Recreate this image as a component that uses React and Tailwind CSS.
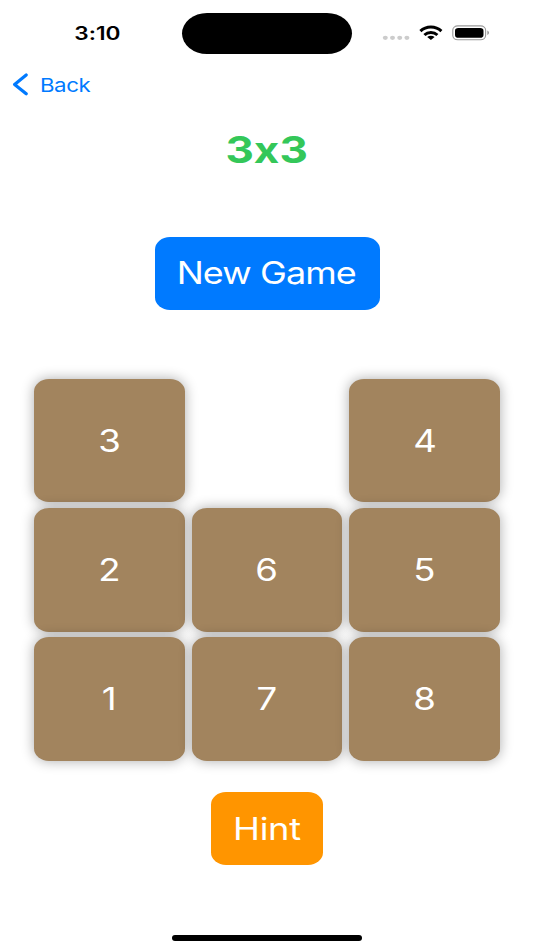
import React from 'react';

const board = [
  [3, null, 4],
  [2, 6, 5],
  [1, 7, 8],
];

const StatusBar = () => (
  <div className="flex h-[66px] pt-[12.5px]">
    <div className="w-[182px] pl-[12px] h-[41px] flex items-center justify-center">
      <span className="text-[18px] font-semibold scale-x-[1.26]">3:10</span>
    </div>
    <div className="w-[170px] h-[41px] bg-black rounded-[25px/20.5px]" />
    <div className="flex-1 h-[41px]">
      <svg className="w-full h-full" viewBox="352 13 182 41">
        <g fill="#cccccc">
          <ellipse cx="385.3" cy="37.8" rx="2.5" ry="2.1" />
          <ellipse cx="392.5" cy="37.8" rx="2.5" ry="2.1" />
          <ellipse cx="399.7" cy="37.8" rx="2.5" ry="2.1" />
          <ellipse cx="406.9" cy="37.8" rx="2.5" ry="2.1" />
        </g>
        <g fill="none" stroke="#000" strokeWidth="3">
          <path d="M420.4 31.1C426.2 25.6 435.6 25.6 441.4 31.1" />
          <path d="M424.4 35C428 31.6 433.8 31.6 437.4 35" />
        </g>
        <path d="M427.2 37.1C429.3 35.4 432.5 35.4 434.6 37.1L430.9 40Z" fill="#000" />
        <rect x="452.8" y="25.9" width="32.8" height="13.8" rx="5" ry="4.2" fill="none" stroke="#999" strokeWidth="1.1" />
        <rect x="455" y="27.9" width="28.5" height="9.8" rx="3.4" ry="2.8" fill="#000" />
        <path d="M487.3 30.6C489.6 31.4 489.6 34.2 487.3 35Z" fill="#999" />
      </svg>
    </div>
  </div>
);

const BackButton = () => (
  <button className="flex items-center h-[37px] pl-[12px] text-[#007aff]">
    <svg className="mb-[2px] w-[17px] h-[24px]" viewBox="0 0 17 24" fill="none">
      <path d="M14.2 3L2.6 12.4L14.2 21.8" stroke="currentColor" strokeWidth="3.2" strokeLinecap="round" strokeLinejoin="round" />
    </svg>
    <span className="mt-[3px] ml-[11px] text-[19px] tracking-[-0.02em] origin-left scale-x-[1.17]">Back</span>
  </button>
);

const Tile = ({ value }) => {
  if (value === null) {
    return <div />;
  }

  return (
    <button className="flex items-center justify-center pt-[1px] bg-[#a2845e] rounded-[15px/12.5px] shadow-[0_0_13px_rgba(0,0,0,0.33)] text-white text-[31px]">
      <span className="scale-x-[1.18]">{value}</span>
    </button>
  );
};

const App = () => {
  return (
    <div className="w-[534px] h-[950px] bg-white text-black overflow-hidden flex flex-col font-['Inter',sans-serif] [font-feature-settings:'calt'_0]">
      <StatusBar />
      <BackButton />

      <h1 className="mt-[26px] h-[40px] flex items-center justify-center text-[37px] leading-none font-bold text-[#34c759]">
        <span className="scale-x-[1.19]">3x3</span>
      </h1>

      <button className="mt-[67.6px] mx-auto w-[225px] h-[73px] shrink-0 flex items-center justify-center rounded-[15px/12.5px] bg-[#007aff] text-white text-[31px]">
        <span className="mr-[2px] whitespace-nowrap tracking-[-0.025em] scale-x-[1.16]">New Game</span>
      </button>

      <div className="mt-[69px] mx-auto w-[466px] h-[382.3px] shrink-0 grid grid-cols-3 grid-rows-3 gap-x-[6.8px] gap-y-[5.8px]">
        {board.flat().map((value, index) => (
          <Tile key={index} value={value} />
        ))}
      </div>

      <button className="mt-[31.3px] mx-auto w-[112px] h-[73px] shrink-0 flex items-center justify-center pt-[1px] rounded-[15px/12.5px] bg-[#ff9500] text-white text-[31px]">
        <span className="mr-[1px] tracking-[-0.01em] scale-x-[1.17]">Hint</span>
      </button>

      <div className="mt-auto mb-[9px] mx-auto w-[190px] h-[6px] rounded-full bg-black" />
    </div>
  );
};

export default App;
